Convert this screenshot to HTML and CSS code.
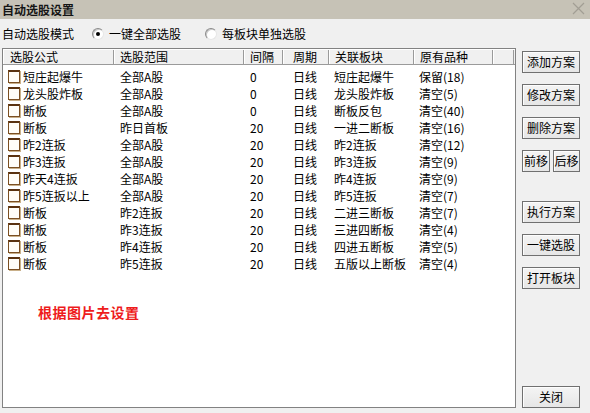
FILE: index.html
```html
<!DOCTYPE html>
<html lang="zh-CN">
<head>
<meta charset="utf-8">
<title>自动选股设置</title>
<link rel="stylesheet" href="styles.css">
</head>
<body>
<div class="window">
  <div class="titlebar">
    <span class="title">自动选股设置</span>
    <svg class="close" width="13" height="13" viewBox="0 0 13 13"><path d="M1 1 L12 12 M12 1 L1 12" stroke="#a29e94" stroke-width="1.2" fill="none"/></svg>
  </div>
  <div class="mode">
    <span class="mode-label">自动选股模式</span>
    <span class="radio checked"></span><span class="radio-label">一键全部选股</span>
    <span class="radio"></span><span class="radio-label">每板块单独选股</span>
  </div>
  <div class="main">
    <div class="list">
      <div class="grid header">
        <div class="hc c1">选股公式</div>
        <div class="hc c2">选股范围</div>
        <div class="hc c3">间隔</div>
        <div class="hc c4">周期</div>
        <div class="hc c5">关联板块</div>
        <div class="hc c6">原有品种</div>
        <div class="hc c7"></div>
      </div>
      <div class="rows">
        <div class="grid row"><div class="c1"><span class="doc"></span>短庄起爆牛</div><div class="c2">全部A股</div><div class="c3">0</div><div class="c4">日线</div><div class="c5">短庄起爆牛</div><div class="c6">保留(18)</div></div>
        <div class="grid row"><div class="c1"><span class="doc"></span>龙头股炸板</div><div class="c2">全部A股</div><div class="c3">0</div><div class="c4">日线</div><div class="c5">龙头股炸板</div><div class="c6">清空(5)</div></div>
        <div class="grid row"><div class="c1"><span class="doc"></span>断板</div><div class="c2">全部A股</div><div class="c3">0</div><div class="c4">日线</div><div class="c5">断板反包</div><div class="c6">清空(40)</div></div>
        <div class="grid row"><div class="c1"><span class="doc"></span>断板</div><div class="c2">昨日首板</div><div class="c3">20</div><div class="c4">日线</div><div class="c5">一进二断板</div><div class="c6">清空(16)</div></div>
        <div class="grid row"><div class="c1"><span class="doc"></span>昨2连扳</div><div class="c2">全部A股</div><div class="c3">20</div><div class="c4">日线</div><div class="c5">昨2连扳</div><div class="c6">清空(12)</div></div>
        <div class="grid row"><div class="c1"><span class="doc"></span>昨3连扳</div><div class="c2">全部A股</div><div class="c3">20</div><div class="c4">日线</div><div class="c5">昨3连扳</div><div class="c6">清空(9)</div></div>
        <div class="grid row"><div class="c1"><span class="doc"></span>昨天4连扳</div><div class="c2">全部A股</div><div class="c3">20</div><div class="c4">日线</div><div class="c5">昨4连扳</div><div class="c6">清空(9)</div></div>
        <div class="grid row"><div class="c1"><span class="doc"></span>昨5连扳以上</div><div class="c2">全部A股</div><div class="c3">20</div><div class="c4">日线</div><div class="c5">昨5连扳</div><div class="c6">清空(7)</div></div>
        <div class="grid row"><div class="c1"><span class="doc"></span>断板</div><div class="c2">昨2连扳</div><div class="c3">20</div><div class="c4">日线</div><div class="c5">二进三断板</div><div class="c6">清空(7)</div></div>
        <div class="grid row"><div class="c1"><span class="doc"></span>断板</div><div class="c2">昨3连扳</div><div class="c3">20</div><div class="c4">日线</div><div class="c5">三进四断板</div><div class="c6">清空(4)</div></div>
        <div class="grid row"><div class="c1"><span class="doc"></span>断板</div><div class="c2">昨4连扳</div><div class="c3">20</div><div class="c4">日线</div><div class="c5">四进五断板</div><div class="c6">清空(5)</div></div>
        <div class="grid row"><div class="c1"><span class="doc"></span>断板</div><div class="c2">昨5连扳</div><div class="c3">20</div><div class="c4">日线</div><div class="c5">五版以上断板</div><div class="c6">清空(4)</div></div>
      </div>
      <div class="note">根据图片去设置</div>
    </div>
    <div class="side">
      <button class="btn">添加方案</button>
      <button class="btn">修改方案</button>
      <button class="btn">删除方案</button>
      <div class="pair">
        <button class="btn small">前移</button>
        <button class="btn small">后移</button>
      </div>
      <button class="btn group">执行方案</button>
      <button class="btn">一键选股</button>
      <button class="btn">打开板块</button>
      <button class="btn closebtn">关闭</button>
    </div>
  </div>
</div>
</body>
</html>
```
FILE: styles.css
```css
* { box-sizing: border-box; }
html, body { margin: 0; padding: 0; }
body {
  width: 590px;
  height: 413px;
  background: #f0f0f0;
  font-family: "Noto Sans CJK SC", "Liberation Sans", sans-serif;
  font-size: 12px;
  color: #000;
  overflow: hidden;
}
.window { width: 590px; height: 413px; display: flex; flex-direction: column; }
.titlebar {
  height: 19px;
  background: #c6c2b6;
  display: flex;
  align-items: center;
  justify-content: space-between;
  padding: 0 5px 0 2px;
}
.title { font-weight: bold; font-size: 12px; line-height: 19px; color: #151515; }
.close { margin-top: -3px; }
.mode {
  height: 29px;
  display: flex;
  align-items: center;
  padding-left: 2px;
  line-height: 14px;
}
.mode-label { margin-right: 18px; }
.radio {
  width: 12px;
  height: 12px;
  border-radius: 50%;
  background: #fff;
  border: 1px solid;
  border-color: #8a8a8a #e6e6e6 #e6e6e6 #8a8a8a;
  box-shadow: inset 1px 1px 0 #c8c8c8;
  display: flex;
  align-items: center;
  justify-content: center;
  margin-right: 5px;
}
.radio.checked::after {
  content: "";
  width: 4px;
  height: 4px;
  border-radius: 50%;
  background: #000;
}
.radio-label { margin-right: 24px; }
.main {
  flex: 1;
  display: flex;
  padding: 0 0 5px 2px;
}
.list {
  width: 514px;
  height: 360px;
  background: #fff;
  border: 1px solid #828282;
}
.grid {
  display: grid;
  grid-template-columns: 111px 130px 39px 46px 85px 79px 21px;
}
.header {
  height: 16px;
  background: #f0f0f0;
  border-top: 1px solid #fff;
  border-bottom: 1px solid #9a9a9a;
  line-height: 14px;
}
.hc {
  padding-left: 6px;
  border-right: 1px solid #9a9a9a;
  box-shadow: inset 1px 0 0 #fff;
  white-space: nowrap;
}
.header .c1 { padding-left: 7px; }
.header .c4, .row .c4 { padding-left: 10px; }
.rows { padding-top: 3px; }
.row { height: 17px; line-height: 17px; }
.row > div { padding-left: 6px; white-space: nowrap; }
.row .c1 { padding-left: 5px; display: flex; align-items: center; }
.row .c5 { padding-left: 5px; }
.row .c6 { padding-left: 5px; }
.doc {
  width: 12px;
  height: 13px;
  margin-right: 3px;
  background: #fffdf8;
  border: 1px solid #7b4f22;
  border-top: 2px solid #5a3210;
  box-shadow: 1px 1px 0 #c9b08a;
  flex: none;
}
.note {
  margin-top: 33px;
  padding-left: 35px;
  color: #ee1c1c;
  font-weight: bold;
  font-size: 14px;
  line-height: 14px;
  letter-spacing: 0.5px;
}
.side {
  width: 58px;
  margin-left: 6px;
  padding-top: 3px;
  display: flex;
  flex-direction: column;
  gap: 11px;
}
.btn {
  height: 22px;
  width: 58px;
  padding: 0;
  font-family: inherit;
  font-size: 12px;
  line-height: 20px;
  color: #000;
  background: linear-gradient(#f4f4f4, #e6e6e6);
  border: 1px solid #707070;
  box-shadow: inset 1px 1px 0 #fdfdfd;
  text-align: center;
}
.pair { display: flex; justify-content: space-between; }
.btn.small { width: 28px; }
.btn.small + .btn.small { width: 27px; }
.btn.group { margin-top: 18px; }
.btn.closebtn { margin-top: auto; }
```
